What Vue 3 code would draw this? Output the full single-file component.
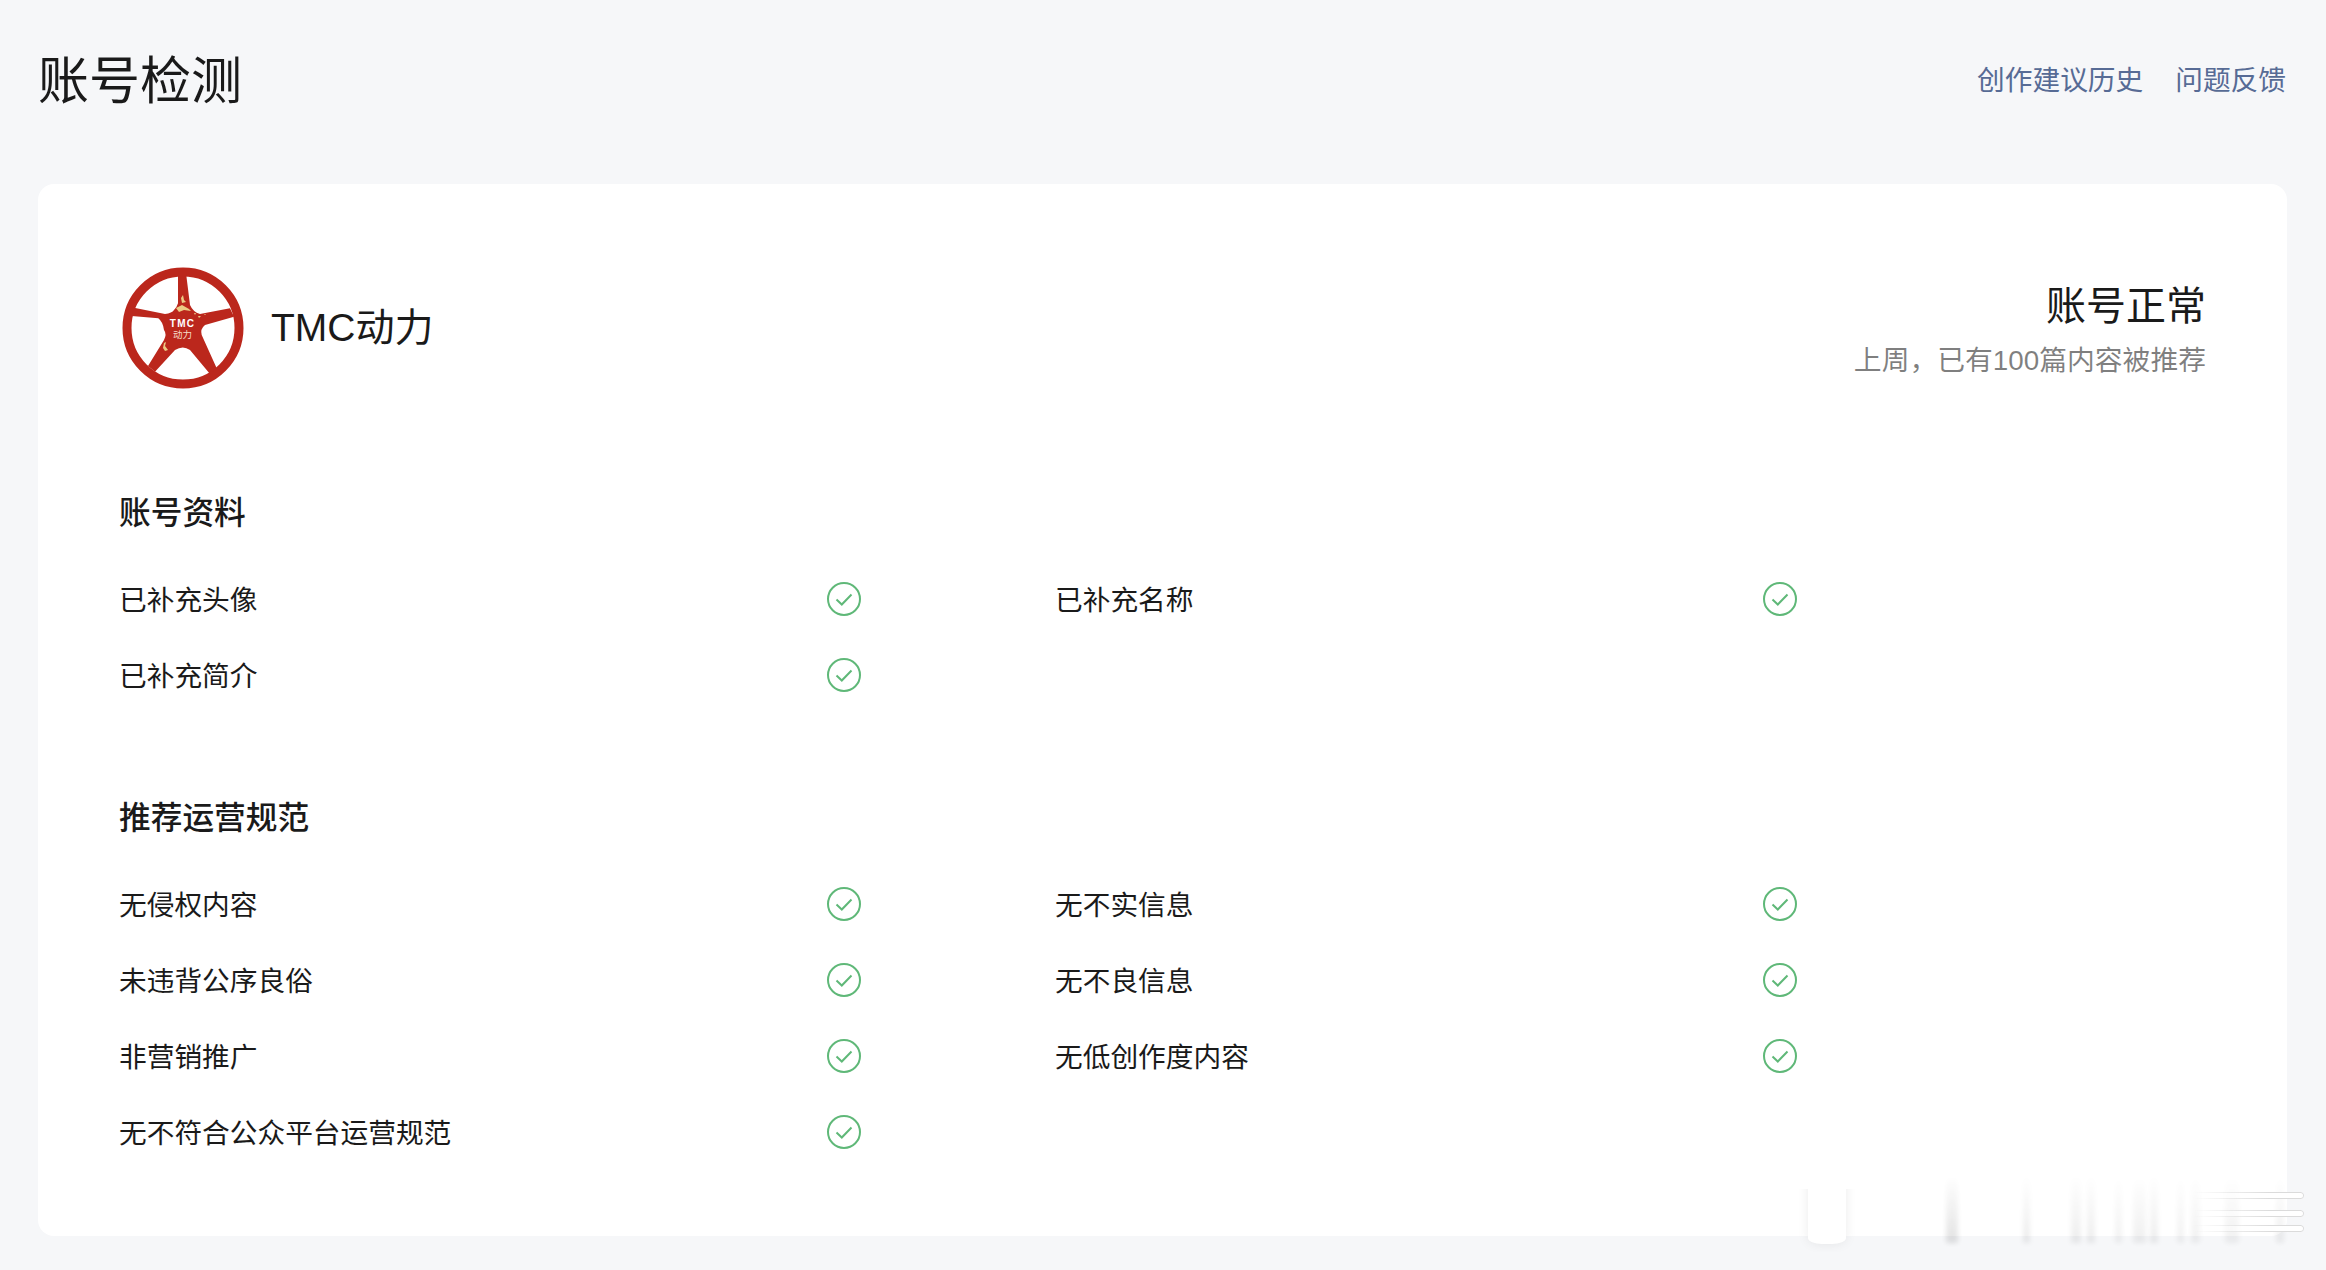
<template>
  <div class="page">
    <header class="page-head">
      <h1 class="page-title">账号检测</h1>
      <nav class="links">
        <a class="link">创作建议历史</a>
        <a class="link">问题反馈</a>
      </nav>
    </header>

    <main class="card">
      <div class="account">
        <div class="profile">
          <svg class="logo" width="128" height="128" viewBox="0 0 128 128">
            <circle cx="64" cy="64" r="56" fill="none" stroke="#bb271c" stroke-width="9" />
            <path
              fill="#bb271c"
              d="M59 9 L67 9 L71 41 Q74 48 81 50 L111 44.3 L115 52.7 L86 61 Q81 65 82.7 71 L97.7 104.3 L91 110 L71 86 Q64 81 56 86 L36 107.7 L29 102 L45 76 Q48 70 45 66 Q44 58 39.3 54.3 L12.7 52 L15 43.7 L46 50 Q53 49 55 46 Q58 43 59 39.3 Z"
            />
            <path
              fill="#eccb84"
              d="M62 34 L64 31 L65 36 L67 38 L63 39 Z M57 44 L63 41 L70 45 L72 47 L65 46 L60 48 Z M75 49 L77 49 L76 51 Z M79 52 L82 52 L80 54 Z M85 50 L87 50 L86 51 Z M45 79 L47 78 L46 82 L49 86 L46 87 L44 84 Z"
            />
            <text class="logo-en" x="63.5" y="63" text-anchor="middle">TMC</text>
            <text class="logo-cn" x="63.5" y="74" text-anchor="middle">动力</text>
          </svg>
          <span class="name">TMC动力</span>
        </div>
        <div class="status">
          <div class="status-title">账号正常</div>
          <div class="status-desc">上周，已有100篇内容被推荐</div>
        </div>
      </div>

      <section v-for="group in groups" :key="group.title" class="group">
        <h2 class="group-title">{{ group.title }}</h2>
        <ul class="items">
          <li v-for="item in group.items" :key="item" class="item">
            <span class="item-text">{{ item }}</span>
            <svg class="check" width="36" height="36" viewBox="0 0 36 36" fill="none">
              <circle cx="18" cy="18" r="16" stroke="#5fb878" stroke-width="2" />
              <path d="M10.5 18.5 L15.8 23.5 L25.5 13.5" stroke="#5fb878" stroke-width="2" />
            </svg>
          </li>
        </ul>
      </section>
    </main>

    <!-- smeared watermark leftovers over the card's bottom right corner -->
    <div class="smear">
      <i class="smear-blob"></i>
      <i v-for="s in stripes" :key="s.x" class="stripe" :style="{ left: s.x + 'px', width: s.w + 'px', opacity: s.o }"></i>
      <i v-for="y in lines" :key="y" class="streak" :style="{ top: y + 'px' }"></i>
    </div>
  </div>
</template>

<script setup>
const groups = [
  {
    title: '账号资料',
    items: ['已补充头像', '已补充名称', '已补充简介']
  },
  {
    title: '推荐运营规范',
    items: ['无侵权内容', '无不实信息', '未违背公序良俗', '无不良信息', '非营销推广', '无低创作度内容', '无不符合公众平台运营规范']
  }
];

// offsets are relative to .smear
const stripes = [
  { x: 146, w: 12, o: 0.8 },
  { x: 223, w: 7, o: 0.55 },
  { x: 271, w: 10, o: 0.5 },
  { x: 287, w: 8, o: 0.5 },
  { x: 315, w: 7, o: 0.4 },
  { x: 333, w: 13, o: 0.45 },
  { x: 350, w: 8, o: 0.5 },
  { x: 377, w: 7, o: 0.4 },
  { x: 391, w: 9, o: 0.4 },
  { x: 425, w: 14, o: 0.4 },
  { x: 476, w: 8, o: 0.45 }
];
const lines = [17, 35, 50];
</script>

<style>
html,
body {
  margin: 0;
  background: #f6f7f9;
}
</style>

<style scoped>
.page {
  position: relative;
  width: 2326px;
  height: 1270px;
  box-sizing: border-box;
  padding: 0 39px 0 38px;
  overflow: hidden;
  font-family: "Liberation Sans", "Noto Sans CJK SC", sans-serif;
  color: #1a1a1a;
}

.page-head {
  display: flex;
  align-items: center;
  justify-content: space-between;
  box-sizing: border-box;
  height: 158px;
  padding-top: 4px;
  padding-right: 1px;
  margin-bottom: 26px;
}

.page-title {
  margin: 0;
  padding-top: 2px;
  font-size: 51px;
  font-weight: 400;
  line-height: 70px;
}

.links {
  display: flex;
  gap: 32px;
}

.link {
  font-size: 27.7px;
  line-height: 40px;
  color: #576b95;
}

.card {
  box-sizing: border-box;
  height: 1052px;
  padding: 80px 81px 0 81px;
  background: #fff;
  border-radius: 16px;
}

.account {
  display: flex;
  align-items: center;
  justify-content: space-between;
  height: 128px;
  margin-bottom: 99px;
}

.profile {
  display: flex;
  align-items: center;
  gap: 24px;
}

.logo {
  display: block;
}

.logo-en {
  font-size: 10px;
  font-weight: 700;
  letter-spacing: 1.2px;
  fill: #fff;
}

.logo-cn {
  font-size: 9.5px;
  fill: #f6dcc8;
}

.name {
  font-size: 39px;
  line-height: 54px;
}

.status {
  padding-top: 2px;
  text-align: right;
}

.status-title {
  font-size: 40px;
  line-height: 56px;
}

.status-desc {
  margin-top: 8px;
  font-size: 27.8px;
  line-height: 38px;
  color: rgba(0, 0, 0, 0.5);
}

.group {
  margin-bottom: 83px;
}

.group-title {
  margin: 0 0 26px;
  font-size: 31.7px;
  font-weight: 500;
  line-height: 44px;
}

.items {
  display: grid;
  grid-template-columns: 743px 743px;
  column-gap: 193px;
  margin: 0;
  padding: 0;
  list-style: none;
}

.item {
  display: flex;
  align-items: center;
  justify-content: space-between;
  height: 76px;
  font-size: 27.7px;
  color: #1a1a1a;
}

.item-text {
  margin-bottom: 2px;
}

.check {
  display: block;
}

.smear {
  position: absolute;
  left: 1800px;
  top: 1175px;
  width: 510px;
  height: 70px;
  pointer-events: none;
}

.smear-blob {
  position: absolute;
  left: 8px;
  top: 0;
  width: 38px;
  height: 69px;
  background: #fff;
  border-radius: 0 0 14px 14px / 0 0 6px 6px;
  box-shadow: 0 0 12px rgba(0, 0, 0, 0.08);
  clip-path: inset(14px -16px -8px -16px);
}

.stripe {
  position: absolute;
  top: 0;
  height: 68px;
  background: linear-gradient(to bottom, rgba(0, 0, 0, 0), rgba(0, 0, 0, 0.14));
  filter: blur(2.5px);
}

.streak {
  position: absolute;
  right: 6px;
  width: 110px;
  height: 7px;
  box-sizing: border-box;
  border: 1px solid rgba(0, 0, 0, 0.14);
  border-left: 0;
  border-radius: 0 4px 4px 0;
  background: #fff;
  mask-image: linear-gradient(to right, transparent, #000 70%);
}
</style>
